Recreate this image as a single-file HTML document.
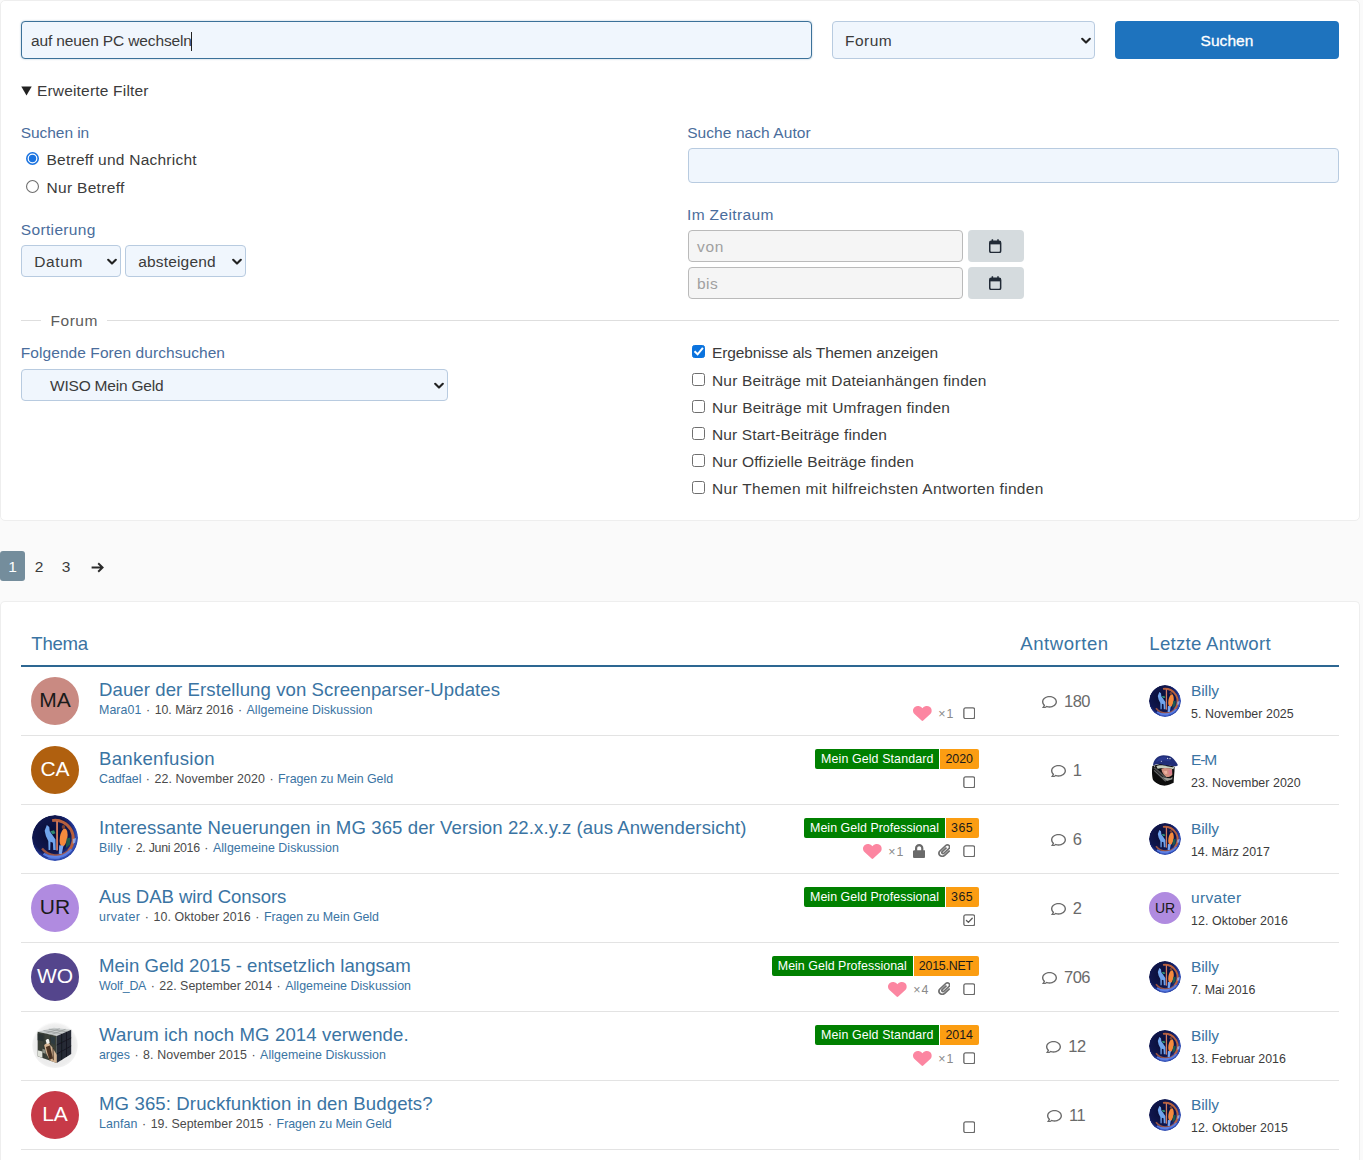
<!DOCTYPE html>
<html lang="de">
<head>
<meta charset="utf-8">
<title>Suche - Forum</title>
<style>
*{box-sizing:border-box}
html,body{margin:0;padding:0}
body{width:1363px;height:1160px;overflow:hidden;background:#fafafa;font-family:"Liberation Sans",sans-serif;font-size:15.5px;color:#3b3b3b;position:relative}
.card{position:absolute;left:0;width:1360px;background:#fff;border:1px solid #eeeeee;border-radius:5px}
#c1{top:0;height:521px}
#c2{top:601px;height:600px;border-bottom:none}
.abs{position:absolute}
.fld{position:absolute;padding-top:2px;background:#f0f6fd;border:1px solid #b8cbe0;border-radius:4px;color:#3b3b3b;font-size:15.5px;line-height:1;display:flex;align-items:center;padding-left:9px;white-space:nowrap}
.fld.focus{border-color:#3b7199;box-shadow:0 0 2px rgba(59,113,153,.45)}
.chev{position:absolute;right:3.3px;top:50%;margin-top:-3.5px;width:10px;height:8px}
.lbl{position:absolute;color:#4a6d9c;font-size:15.5px;line-height:20px;white-space:nowrap}
.txt{position:absolute;color:#3b3b3b;font-size:15.5px;line-height:20px;white-space:nowrap}
.radio{position:absolute;width:13px;height:13px;border-radius:50%;border:1px solid #767676;background:#fff}
.radio.on{border:1.7px solid #1a73e0}
.radio.on::after{content:"";position:absolute;left:1.1px;top:1.1px;width:7.4px;height:7.4px;border-radius:50%;background:#1a73e0}
.cb{position:absolute;width:13px;height:13px;border-radius:2.5px;border:1.3px solid #6f6f6f;background:#fff}
.cb.on{border:1px solid #0b73de;background:#0b73de}
.gray{position:absolute;padding-top:2px;background:#f5f5f5;border:1px solid #bababa;border-radius:4px;color:#a0a0a0;font-size:15.5px;display:flex;align-items:center;padding-left:8px}
.calbtn{position:absolute;background:#d5dbde;border-radius:4px;display:flex;align-items:center;justify-content:center}
#btn{-webkit-text-stroke:.3px #fff;padding-top:1px;position:absolute;left:1115px;top:21px;width:224px;height:38px;background:#1e73be;border-radius:4px;color:#fff;font-size:15.5px;display:flex;align-items:center;justify-content:center}
.pg{position:absolute;top:551px;height:30px;line-height:32px;font-size:15.5px;color:#3b3b3b;text-align:center}
.th{position:absolute;top:632px;font-size:18.6px;line-height:24px;color:#3a74a3;white-space:nowrap}
.row{position:absolute;left:21px;width:1318px;height:69px;border-bottom:1px solid #e3e3e3}
.av{padding-bottom:2px;position:absolute;left:10px;top:10px;width:48px;height:48px;border-radius:50%;overflow:hidden;display:flex;align-items:center;justify-content:center;font-size:21px;color:#fff}
.ti{position:absolute;left:78px;top:11px;font-size:18.6px;line-height:24px;color:#3a74a3;white-space:nowrap}
.me{position:absolute;left:78px;top:35px;font-size:12.4px;line-height:16px;color:#3a74a3;white-space:nowrap}
.me b{font-weight:400;color:#4a4a4a}
.tags{position:absolute;right:360px;top:13px;height:20px;display:flex;font-size:12.4px;line-height:20px;white-space:nowrap}
.tg{background:#008000;color:#fff;padding:0 6px;border-radius:2px 0 0 2px}
.ty{background:#fb9d12;color:#1a1a1a;padding:0 6px 0 5px;border-radius:0 2px 2px 0;border-left:1px solid #fff}
.ic{position:absolute;right:357.5px;top:37px;height:18px;display:flex;align-items:center;font-size:12.4px;color:#7a7a7a}
.rp{position:absolute;left:980px;width:130px;top:24px;height:22px;display:flex;align-items:center;justify-content:center;font-size:15px;color:#6a6a6a}
.la{position:absolute;left:1128px;top:18px;width:32px;height:32px;border-radius:50%;overflow:hidden;display:flex;align-items:center;justify-content:center;font-size:14px}
.ln{position:absolute;left:1170px;top:14px;font-size:15.5px;line-height:20px;color:#3a74a3;white-space:nowrap}
.ld{position:absolute;left:1170px;top:39px;font-size:12.4px;line-height:16px;color:#3b3b3b;white-space:nowrap}
.me i{font-style:normal;color:#4a4a4a;padding:0 4.5px}
.heart{margin-right:6.3px}
.lk{letter-spacing:1px;margin-right:2.2px;position:relative;top:.5px;color:#8a8a8a;font-size:12.4px}
.ib{width:25px;height:18px;display:flex;align-items:center;justify-content:center}
.rp svg{margin-right:7px}
.rp span{font-size:16.5px;letter-spacing:-.55px;position:relative;top:-.5px}
.caret{display:inline-block;width:1px;height:19px;background:#222;margin-left:-1px}
.me b span,.me>span{display:inline-block}
</style>
</head>
<body>
<svg width="0" height="0" style="position:absolute">
<defs>
<symbol id="i-heart" viewBox="0 30 512 452" preserveAspectRatio="none"><path d="M462.3 62.6C407.5 15.9 326 24.3 275.7 76.2L256 96.5l-19.700-20.300C186.100 24.300 104.500 15.900 49.700 62.600c-62.800 53.600-66.100 149.800-9.900 207.900l193.500 199.800c12.500 12.900 32.800 12.900 45.300 0l193.500-199.800c56.300-58.100 53-154.300-9.800-207.900z" fill="#fc86a1"/></symbol>
<symbol id="i-lock" viewBox="0 0 448 512" preserveAspectRatio="none"><path d="M400 224h-24v-72C376 68.200 307.800 0 224 0S72 68.200 72 152v72H48c-26.500 0-48 21.500-48 48v192c0 26.500 21.500 48 48 48h352c26.500 0 48-21.500 48-48V272c0-26.500-21.500-48-48-48zm-104 0H152v-72c0-39.700 32.300-72 72-72s72 32.300 72 72v72z" fill="#6a6a6a"/></symbol>
<symbol id="i-clip" viewBox="0 0 448 512" preserveAspectRatio="none"><path d="M43.246 466.142c-58.430-60.289-57.341-157.511 1.386-217.581L254.392 34c44.316-45.332 116.351-45.336 160.671 0 43.890 44.894 43.943 117.329 0 162.276L232.214 383.128c-29.855 30.537-78.633 30.111-107.982-.998-28.275-29.970-27.368-77.473 1.452-106.953l143.743-146.835c6.182-6.314 16.312-6.422 22.626-.241l22.861 22.379c6.315 6.182 6.422 16.312.241 22.626L171.427 319.927c-4.932 5.045-5.236 13.428-.648 18.292 4.372 4.634 11.245 4.711 15.688.165l182.849-186.851c19.613-20.062 19.613-52.725-.011-72.798-19.189-19.627-49.957-19.637-69.154 0L90.390 293.295c-34.763 35.560-35.299 93.120-1.191 128.313 34.010 35.093 88.985 35.137 123.058.286l172.060-175.999c6.177-6.319 16.307-6.433 22.626-.256l22.877 22.364c6.319 6.177 6.434 16.307.256 22.626l-172.060 175.998c-59.576 60.938-155.943 60.216-214.770-.485z" fill="#707070"/></symbol>
<symbol id="i-sq" viewBox="0 0 13 13"><rect x="0.9" y="0.9" width="11.2" height="11.2" rx="1.8" fill="none" stroke="#6a6a6a" stroke-width="1.4"/></symbol>
<symbol id="i-sqc" viewBox="0 0 13 13"><rect x="0.9" y="0.9" width="11.2" height="11.2" rx="1.8" fill="none" stroke="#6a6a6a" stroke-width="1.4"/><path d="M3.6 6.7 L5.6 8.7 L9.6 4.4" fill="none" stroke="#5a5a5a" stroke-width="1.4" stroke-linecap="round" stroke-linejoin="round"/></symbol>
<symbol id="i-cmt" viewBox="0 32 512 448" preserveAspectRatio="none"><path d="M256 32C114.600 32 0 125.100 0 240c0 47.600 19.900 91.200 52.900 126.300C38 405.700 7 439.100 6.500 439.500c-6.600 7-8.400 17.200-4.600 26S14.400 480 24 480c61.500 0 110-25.700 139.100-46.300C192 442.800 223.200 448 256 448c141.400 0 256-93.100 256-208S397.400 32 256 32zm0 368c-26.700 0-53.100-4.100-78.400-12.100l-22.700-7.200-19.500 13.800c-14.300 10.100-33.900 21.400-57.500 29 7.300-12.100 14.400-25.700 19.900-40.200l10.600-28.100-20.600-21.800C69.700 314.100 48 282.200 48 240c0-88.200 93.300-160 208-160s208 71.800 208 160-93.300 160-208 160z" fill="#6c6c6c"/></symbol>
<symbol id="av-billy" viewBox="0 0 48 48">
<radialGradient id="gb" cx="0.42" cy="0.42" r="0.6"><stop offset="0" stop-color="#080c34"/><stop offset="0.68" stop-color="#10174e"/><stop offset="0.8" stop-color="#1c2c80"/><stop offset="0.92" stop-color="#3352bc"/><stop offset="1" stop-color="#2b44a4"/></radialGradient>
<filter id="fb" x="-5%" y="-5%" width="110%" height="110%"><feGaussianBlur stdDeviation="0.7"/></filter>
<clipPath id="cb48"><circle cx="24" cy="24" r="24"/></clipPath>
<g clip-path="url(#cb48)">
<circle cx="24" cy="24" r="24" fill="url(#gb)"/>
<g filter="url(#fb)">
<path d="M21 5.8 A19 19 0 0 1 38 37.5" fill="none" stroke="#b8603e" stroke-width="3"/>
<path d="M10.5 35 A19 19 0 0 0 38 37.5" fill="none" stroke="#a85a40" stroke-width="2.4" opacity=".9"/>
<path d="M12 40.5 A22 22 0 0 0 41 36" fill="none" stroke="#5a80e8" stroke-width="2.6" opacity=".9"/>
<path d="M16 43 H30 M17 45 H29" stroke="#6a90f0" stroke-width="1" opacity=".8"/>
<rect x="25.2" y="6.5" width="1.9" height="30.5" fill="#d27a60"/>
<path d="M13.2 16.5 L15.5 10.5 L18 12.5 L18.5 17 L21.5 21 L24.5 25.5 L24.8 36.5 L22.2 36.5 L21.8 29 L19.3 28 L19 36.5 L17.3 36.5 L17 27 L14.5 22 Z" fill="#6fa4ec"/>
<path d="M19 17 L23 16 L24.5 19 L21.5 20 Z" fill="#2f8a70"/>
<ellipse cx="33" cy="23.5" rx="3.9" ry="9.6" transform="rotate(9 33 23.5)" fill="#f58a3c"/>
<ellipse cx="32.8" cy="12.5" rx="1.8" ry="2" fill="#7a4030"/>
<path d="M28.4 31.5 L32.8 32 L31 41 L28 40.5 Z" fill="#79a8f2"/>
<path d="M36.2 24.5 L40 23.5 L39.5 31 L35.2 34.5 Z" fill="#1d5c50"/>
<path d="M42.5 25 L46 24 L45 29 L42.5 30 Z" fill="#9ab8f0" opacity=".8"/>
</g>
</g>
</symbol>
<symbol id="av-em" viewBox="0 0 48 48">
<filter id="fe" x="-5%" y="-5%" width="110%" height="110%"><feGaussianBlur stdDeviation="0.8"/></filter>
<rect width="48" height="48" fill="#fff"/>
<g filter="url(#fe)">
<path d="M5 18 C4 26 4.5 34 6 39 C10 44 17 47.5 23 47.5 C29 46.5 34 44.5 37 43 C37 36 38.5 26 38.5 19 L20 14 Z" fill="#0e0e10"/>
<path d="M6 17.5 C6.5 8 14 2 22 2 C27 2 31 3.2 33.5 4.5 C38 8 41.5 12.5 43.5 17 L40.5 18.5 C32 17 26 17.5 21 16 C15 14.8 9.5 15.5 6 17.5 Z" fill="#222f78"/>
<path d="M10 12 C13 6 19 3.5 25 4 L34 12 C27 9 18 9 10 12 Z" fill="#2c3c94" opacity=".8"/>
<path d="M11 18.5 C15 16 22 17 27 18.5 C31 19.5 35 20 38 19.5 L36.5 23 C30 21 20 20 13 22 Z" fill="#c4ccbc"/>
<path d="M18.5 22.5 C22 20.5 29 21 34.5 22.5 L35 31 C33 34 29 35 25.5 34.5 C22 32 19.5 27.5 18.5 22.5 Z" fill="#d0907f"/>
<path d="M29 24 L34.5 24.5 L34.5 30 L30 31 Z" fill="#d87c8c"/>
<path d="M22 26 L27 25 L27.5 29.5 L24 30 Z" fill="#eab0a0"/>
<path d="M6.5 21 L9 20 L29 37 L27 39.5 Z" fill="#4a4a4a"/>
<path d="M7 25 L8.5 24 L26 40 L24.5 41.5 Z" fill="#8a8a8a" opacity=".7"/>
<path d="M18 33.5 L24 36 L33 36.5 L35 34 L35 38 L27 40.5 Z" fill="#9a9c96"/>
<circle cx="28" cy="6.5" r=".9" fill="#fff"/><circle cx="31.5" cy="7" r=".9" fill="#fff"/><circle cx="18.5" cy="11" r=".8" fill="#e8e8ff"/><circle cx="8.5" cy="18.5" r=".8" fill="#ddd"/>
</g>
</symbol>
<symbol id="av-cube" viewBox="0 0 48 48">
<radialGradient id="gc" cx="0.5" cy="0.52" r="0.5"><stop offset="0" stop-color="#eeeeee"/><stop offset="0.85" stop-color="#ececec"/><stop offset="0.96" stop-color="#f2f2f2"/><stop offset="1" stop-color="#fafafa"/></radialGradient>
<filter id="fc" x="-5%" y="-5%" width="110%" height="110%"><feGaussianBlur stdDeviation="0.7"/></filter>
<circle cx="24" cy="24" r="24" fill="url(#gc)"/>
<g filter="url(#fc)">
<path d="M5.9 10.3 L22.8 6.1 L40.9 8.2 L25.8 14.5 Z" fill="#c9cdcd"/>
<path d="M12 8.9 L31 12.3 M17.5 7.5 L36 10.2 M14 12 L29 7 M20 13.2 L35 7.6" stroke="#8c9090" stroke-width=".6" fill="none"/>
<path d="M5.9 10.3 L25.8 14.5 L25.8 42.9 L5.9 35.7 Z" fill="#3a4039"/>
<path d="M25.8 14.5 L40.9 8.2 L40.9 33.3 L25.8 42.9 Z" fill="#272a36"/>
<path d="M5.9 12 L12 13 L12 20 L5.9 19 Z" fill="#2c3230"/>
<path d="M12.5 24 L17 21 L20.5 25.5 L25.8 34 L25.8 42.9 L19 40.5 L15 33 Z" fill="#d4b494"/>
<path d="M14.5 26 L18.5 24.5 L20 30 L22 38 L18 39 L16 32 Z" fill="#4e3424"/>
<path d="M21.5 27 L22.3 27 L22.6 40 L21.8 40 Z" fill="#2a1c14"/>
<path d="M14.3 19.5 C15 17.3 17.5 17 18 19.2 L18.5 22 L15.5 23 Z" fill="#f2f2ee"/>
<path d="M5.9 29.5 L10.8 30.8 L10.8 37.4 L5.9 35.7 Z" fill="#dfe2da"/>
<path d="M11 28 L14 29 L14 33 L11 32 Z" fill="#b8bcae" opacity=".8"/>
<path d="M19 15 L24 16 L24 24 L20 22 Z" fill="#2a3a44" opacity=".8"/>
<path d="M25.8 24 L40.9 16.6 M25.8 33.4 L40.9 25 M30.9 12.4 L30.9 39.7 M36 10.3 L36 36.4" stroke="#12141c" stroke-width=".8" fill="none"/>
<path d="M12.5 11.7 L12.5 38 M19.2 13.1 L19.2 40.5" stroke="#20241f" stroke-width=".5" fill="none" opacity=".6"/>
</g>
</symbol>
</defs>
</svg>

<div class="card" id="c1"></div>
<div class="card" id="c2"></div>
<!-- search bar -->
<div class="fld focus" style="left:21px;top:21px;width:791px;height:38px"><span style="letter-spacing:-0.141px">auf neuen PC wechseln</span><span class="caret"></span></div>
<div class="fld" style="left:832px;top:21px;width:263px;height:38px;padding-left:12px"><span style="letter-spacing:0.501px">Forum</span><svg class="chev" viewBox="0 0 10 8"><path d="M1.2 1.8 L5 5.6 L8.8 1.8" fill="none" stroke="#222" stroke-width="2.1" stroke-linecap="round" stroke-linejoin="round"/></svg></div>
<div id="btn"><span style="letter-spacing:0.044px">Suchen</span></div>
<!-- filter -->
<svg class="abs" style="left:21px;top:86px" width="11" height="10" viewBox="0 0 11 10"><path d="M0.3 0.6 H10.7 L5.5 9.4 Z" fill="#222"/></svg>
<div class="txt" style="left:36.9px;top:81px"><span style="letter-spacing:0.192px">Erweiterte Filter</span></div>
<div class="lbl" style="left:20.8px;top:123px"><span style="letter-spacing:-0.069px">Suchen in</span></div>
<svg class="abs" style="left:26px;top:152px" width="13" height="13" viewBox="0 0 13 13"><circle cx="6.5" cy="6.5" r="5.7" fill="#fff" stroke="#1a73e0" stroke-width="1.6"/><circle cx="6.5" cy="6.5" r="3.7" fill="#1a73e0"/></svg>
<div class="txt" style="left:46.5px;top:150px"><span style="letter-spacing:0.239px">Betreff und Nachricht</span></div>
<svg class="abs" style="left:26px;top:180px" width="13" height="13" viewBox="0 0 13 13"><circle cx="6.5" cy="6.5" r="5.95" fill="#fff" stroke="#6e6e6e" stroke-width="1.1"/></svg>
<div class="txt" style="left:46.5px;top:178px"><span style="letter-spacing:0.313px">Nur Betreff</span></div>
<div class="lbl" style="left:20.8px;top:220px"><span style="letter-spacing:0.343px">Sortierung</span></div>
<div class="fld" style="left:21px;top:245px;width:100px;height:32px;padding-left:12.2px"><span style="letter-spacing:0.636px">Datum</span><svg class="chev" viewBox="0 0 10 8"><path d="M1.2 1.8 L5 5.6 L8.8 1.8" fill="none" stroke="#222" stroke-width="2.1" stroke-linecap="round" stroke-linejoin="round"/></svg></div>
<div class="fld" style="left:125px;top:245px;width:121px;height:32px;padding-left:12.2px"><span style="letter-spacing:0.173px">absteigend</span><svg class="chev" viewBox="0 0 10 8"><path d="M1.2 1.8 L5 5.6 L8.8 1.8" fill="none" stroke="#222" stroke-width="2.1" stroke-linecap="round" stroke-linejoin="round"/></svg></div>
<div class="lbl" style="left:687.2px;top:123px"><span style="letter-spacing:0.075px">Suche nach Autor</span></div>
<div class="fld" style="left:688px;top:148px;width:651px;height:35px"></div>
<div class="lbl" style="left:687px;top:205px"><span style="letter-spacing:0.361px">Im Zeitraum</span></div>
<div class="gray" style="left:688px;top:230px;width:275px;height:32px"><span style="letter-spacing:0.7px">von</span></div>
<div class="calbtn" style="left:968px;top:230px;width:56px;height:32px"><svg width="12.4" height="14.3" viewBox="0 0 12.4 13.6" preserveAspectRatio="none" style="position:relative;left:-.6px;top:0"><path d="M3.4 0.3v2.2M9 0.3v2.2" stroke="#212a36" stroke-width="1.5"/><rect x="0.75" y="2.2" width="10.9" height="10.6" rx="1.5" fill="none" stroke="#212a36" stroke-width="1.5"/><rect x="0.75" y="2.2" width="10.9" height="2.9" fill="#212a36"/></svg></div>
<div class="gray" style="left:688px;top:267px;width:275px;height:32px"><span style="letter-spacing:0.486px">bis</span></div>
<div class="calbtn" style="left:968px;top:267px;width:56px;height:32px"><svg width="12.4" height="14.3" viewBox="0 0 12.4 13.6" preserveAspectRatio="none" style="position:relative;left:-.6px;top:0"><path d="M3.4 0.3v2.2M9 0.3v2.2" stroke="#212a36" stroke-width="1.5"/><rect x="0.75" y="2.2" width="10.9" height="10.6" rx="1.5" fill="none" stroke="#212a36" stroke-width="1.5"/><rect x="0.75" y="2.2" width="10.9" height="2.9" fill="#212a36"/></svg></div>
<!-- fieldset -->
<div class="abs" style="left:21px;top:320px;width:20px;height:1px;background:#dedede"></div>
<div class="abs" style="left:107px;top:320px;width:1232px;height:1px;background:#dedede"></div>
<div class="txt" style="left:50.5px;top:311px;color:#5c5c5c"><span style="letter-spacing:0.526px">Forum</span></div>
<div class="lbl" style="left:20.8px;top:343px"><span style="letter-spacing:0.068px">Folgende Foren durchsuchen</span></div>
<div class="fld" style="left:21px;top:369px;width:427px;height:32px;padding-left:28px"><span style="letter-spacing:-0.206px">WISO Mein Geld</span><svg class="chev" viewBox="0 0 10 8"><path d="M1.2 1.8 L5 5.6 L8.8 1.8" fill="none" stroke="#222" stroke-width="2.1" stroke-linecap="round" stroke-linejoin="round"/></svg></div>
<div class="cb on" style="left:692px;top:345px"><svg width="11" height="11" viewBox="0 0 11 11" style="position:absolute;left:0;top:0"><path d="M1.5 5.3 L4.6 8.3 L9.9 1.9" fill="none" stroke="#fff" stroke-width="2"/></svg></div>
<div class="txt" style="left:712px;top:343px"><span style="letter-spacing:-0.123px">Ergebnisse als Themen anzeigen</span></div>
<div class="cb" style="left:692px;top:373px"></div>
<div class="txt" style="left:712px;top:371px"><span style="letter-spacing:0.178px">Nur Beiträge mit Dateianhängen finden</span></div>
<div class="cb" style="left:692px;top:400px"></div>
<div class="txt" style="left:712px;top:398px"><span style="letter-spacing:0.226px">Nur Beiträge mit Umfragen finden</span></div>
<div class="cb" style="left:692px;top:427px"></div>
<div class="txt" style="left:712px;top:425px"><span style="letter-spacing:0.144px">Nur Start-Beiträge finden</span></div>
<div class="cb" style="left:692px;top:454px"></div>
<div class="txt" style="left:712px;top:452px"><span style="letter-spacing:0.168px">Nur Offizielle Beiträge finden</span></div>
<div class="cb" style="left:692px;top:481px"></div>
<div class="txt" style="left:712px;top:479px"><span style="letter-spacing:0.311px">Nur Themen mit hilfreichsten Antworten finden</span></div>
<!-- pagination -->
<div class="pg" style="left:0;width:25px;background:#748d9c;color:#fff;border-radius:3px">1</div>
<div class="pg" style="left:27px;width:24px">2</div>
<div class="pg" style="left:54px;width:24px">3</div>
<svg class="abs" style="left:91.3px;top:561.5px" width="13" height="11" viewBox="0 0 13 11"><path d="M0.6 5.5 H11.4 M7.2 1.2 L11.6 5.5 L7.2 9.8" fill="none" stroke="#2a2a2a" stroke-width="1.9" stroke-linecap="butt" stroke-linejoin="miter"/></svg>
<!-- table header -->
<div class="th" style="left:31.3px"><span style="letter-spacing:-0.269px">Thema</span></div>
<div class="th" style="left:1020.3px"><span style="letter-spacing:0.523px">Antworten</span></div>
<div class="th" style="left:1149.3px"><span style="letter-spacing:0.267px">Letzte Antwort</span></div>
<div class="abs" style="left:21px;top:665px;width:1318px;height:2px;background:#2d6792"></div>
<!-- rows -->
<div class="row" style="top:667px">
<div class="av" style="background:#c98a82;color:#1a1a1a">MA</div>
<div class="ti"><span style="letter-spacing:0.07px">Dauer der Erstellung von Screenparser-Updates</span></div>
<div class="me"><span style="letter-spacing:0.077px">Mara01</span><i>·</i><b><span style="letter-spacing:-0.035px">10. März 2016</span></b><i>·</i><span style="letter-spacing:0.057px">Allgemeine Diskussion</span></div>
<div class="ic"><svg class="heart" width="18.8" height="15"><use href="#i-heart"/></svg><span class="lk">×1</span><span class="ib"><svg width="12.5" height="12.5" viewBox="0 0 13 13" style="position:relative;top:0;left:-.2px"><use href="#i-sq"/></svg></span></div>
<div class="rp"><svg width="15" height="12.6"><use href="#i-cmt"/></svg><span>180</span></div>
<div class="la"><svg width="100%" height="100%" viewBox="0 0 48 48"><use href="#av-billy"/></svg></div>
<div class="ln"><span style="letter-spacing:-0.08px">Billy</span></div>
<div class="ld"><span style="letter-spacing:0.05px">5. November 2025</span></div>
</div>
<div class="row" style="top:736px">
<div class="av" style="background:#b0600f;color:#fff">CA</div>
<div class="ti"><span style="letter-spacing:0.265px">Bankenfusion</span></div>
<div class="me"><span style="letter-spacing:-0.053px">Cadfael</span><i>·</i><b><span style="letter-spacing:0.091px">22. November 2020</span></b><i>·</i><span style="letter-spacing:-0.039px">Fragen zu Mein Geld</span></div>
<div class="tags"><span class="tg"><span style="letter-spacing:0.117px">Mein Geld Standard</span></span><span class="ty"><span style="letter-spacing:0.007px">2020</span></span></div>
<div class="ic"><span class="ib"><svg width="12.5" height="12.5" viewBox="0 0 13 13" style="position:relative;top:0;left:-.2px"><use href="#i-sq"/></svg></span></div>
<div class="rp"><svg width="15" height="12.6"><use href="#i-cmt"/></svg><span>1</span></div>
<div class="la"><svg width="100%" height="100%" viewBox="0 0 48 48"><use href="#av-em"/></svg></div>
<div class="ln"><span style="letter-spacing:-1.161px">E-M</span></div>
<div class="ld"><span style="letter-spacing:0.054px">23. November 2020</span></div>
</div>
<div class="row" style="top:805px">
<div class="av"><svg width="100%" height="100%" viewBox="0 0 48 48"><use href="#av-billy"/></svg></div>
<div class="ti"><span style="letter-spacing:0.082px">Interessante Neuerungen in MG 365 der Version 22.x.y.z (aus Anwendersicht)</span></div>
<div class="me"><span style="letter-spacing:0.17px">Billy</span><i>·</i><b><span style="letter-spacing:-0.283px">2. Juni 2016</span></b><i>·</i><span style="letter-spacing:0.057px">Allgemeine Diskussion</span></div>
<div class="tags"><span class="tg"><span style="letter-spacing:0.042px">Mein Geld Professional</span></span><span class="ty"><span style="letter-spacing:0.406px">365</span></span></div>
<div class="ic"><svg class="heart" width="18.8" height="15"><use href="#i-heart"/></svg><span class="lk">×1</span><span class="ib"><svg width="12.4" height="14" viewBox="0 0 448 512" preserveAspectRatio="none" style="position:relative;top:-.4px"><use href="#i-lock"/></svg></span><span class="ib"><svg width="12.6" height="13.2" viewBox="0 0 448 512" preserveAspectRatio="none" style="position:relative;top:-.6px"><use href="#i-clip"/></svg></span><span class="ib"><svg width="12.5" height="12.5" viewBox="0 0 13 13" style="position:relative;top:0;left:-.2px"><use href="#i-sq"/></svg></span></div>
<div class="rp"><svg width="15" height="12.6"><use href="#i-cmt"/></svg><span>6</span></div>
<div class="la"><svg width="100%" height="100%" viewBox="0 0 48 48"><use href="#av-billy"/></svg></div>
<div class="ln"><span style="letter-spacing:-0.08px">Billy</span></div>
<div class="ld"><span style="letter-spacing:-0.035px">14. März 2017</span></div>
</div>
<div class="row" style="top:874px">
<div class="av" style="background:#b08be0;color:#1a1a1a">UR</div>
<div class="ti"><span style="letter-spacing:-0.09px">Aus DAB wird Consors</span></div>
<div class="me"><span style="letter-spacing:0.387px">urvater</span><i>·</i><b><span style="letter-spacing:0.103px">10. Oktober 2016</span></b><i>·</i><span style="letter-spacing:-0.039px">Fragen zu Mein Geld</span></div>
<div class="tags"><span class="tg"><span style="letter-spacing:0.042px">Mein Geld Professional</span></span><span class="ty"><span style="letter-spacing:0.406px">365</span></span></div>
<div class="ic"><span class="ib"><svg width="12.5" height="12.5" viewBox="0 0 13 13" style="position:relative;top:0;left:-.2px"><use href="#i-sqc"/></svg></span></div>
<div class="rp"><svg width="15" height="12.6"><use href="#i-cmt"/></svg><span>2</span></div>
<div class="la" style="background:#b08be0;color:#1a1a1a">UR</div>
<div class="ln"><span style="letter-spacing:0.308px">urvater</span></div>
<div class="ld"><span style="letter-spacing:0.07px">12. Oktober 2016</span></div>
</div>
<div class="row" style="top:943px">
<div class="av" style="background:#54458c;color:#fff">WO</div>
<div class="ti"><span style="letter-spacing:0.017px">Mein Geld 2015 - entsetzlich langsam</span></div>
<div class="me"><span style="letter-spacing:-0.212px">Wolf_DA</span><i>·</i><b><span style="letter-spacing:0.024px">22. September 2014</span></b><i>·</i><span style="letter-spacing:0.057px">Allgemeine Diskussion</span></div>
<div class="tags"><span class="tg"><span style="letter-spacing:0.042px">Mein Geld Professional</span></span><span class="ty"><span style="letter-spacing:-0.2px">2015.NET</span></span></div>
<div class="ic"><svg class="heart" width="18.8" height="15"><use href="#i-heart"/></svg><span class="lk">×4</span><span class="ib"><svg width="12.6" height="13.2" viewBox="0 0 448 512" preserveAspectRatio="none" style="position:relative;top:-.6px"><use href="#i-clip"/></svg></span><span class="ib"><svg width="12.5" height="12.5" viewBox="0 0 13 13" style="position:relative;top:0;left:-.2px"><use href="#i-sq"/></svg></span></div>
<div class="rp"><svg width="15" height="12.6"><use href="#i-cmt"/></svg><span>706</span></div>
<div class="la"><svg width="100%" height="100%" viewBox="0 0 48 48"><use href="#av-billy"/></svg></div>
<div class="ln"><span style="letter-spacing:-0.08px">Billy</span></div>
<div class="ld"><span style="letter-spacing:-0.045px">7. Mai 2016</span></div>
</div>
<div class="row" style="top:1012px">
<div class="av"><svg width="100%" height="100%" viewBox="0 0 48 48"><use href="#av-cube"/></svg></div>
<div class="ti"><span style="letter-spacing:0.111px">Warum ich noch MG 2014 verwende.</span></div>
<div class="me"><span style="letter-spacing:-0.025px">arges</span><i>·</i><b><span style="letter-spacing:0.123px">8. November 2015</span></b><i>·</i><span style="letter-spacing:0.057px">Allgemeine Diskussion</span></div>
<div class="tags"><span class="tg"><span style="letter-spacing:0.117px">Mein Geld Standard</span></span><span class="ty"><span style="letter-spacing:0.007px">2014</span></span></div>
<div class="ic"><svg class="heart" width="18.8" height="15"><use href="#i-heart"/></svg><span class="lk">×1</span><span class="ib"><svg width="12.5" height="12.5" viewBox="0 0 13 13" style="position:relative;top:0;left:-.2px"><use href="#i-sq"/></svg></span></div>
<div class="rp"><svg width="15" height="12.6"><use href="#i-cmt"/></svg><span>12</span></div>
<div class="la"><svg width="100%" height="100%" viewBox="0 0 48 48"><use href="#av-billy"/></svg></div>
<div class="ln"><span style="letter-spacing:-0.08px">Billy</span></div>
<div class="ld"><span style="letter-spacing:-0.018px">13. Februar 2016</span></div>
</div>
<div class="row" style="top:1081px">
<div class="av" style="background:#c73a48;color:#fff">LA</div>
<div class="ti"><span style="letter-spacing:0.108px">MG 365: Druckfunktion in den Budgets?</span></div>
<div class="me"><span style="letter-spacing:0.099px">Lanfan</span><i>·</i><b><span style="letter-spacing:0.03px">19. September 2015</span></b><i>·</i><span style="letter-spacing:-0.039px">Fragen zu Mein Geld</span></div>
<div class="ic"><span class="ib"><svg width="12.5" height="12.5" viewBox="0 0 13 13" style="position:relative;top:0;left:-.2px"><use href="#i-sq"/></svg></span></div>
<div class="rp"><svg width="15" height="12.6"><use href="#i-cmt"/></svg><span>11</span></div>
<div class="la"><svg width="100%" height="100%" viewBox="0 0 48 48"><use href="#av-billy"/></svg></div>
<div class="ln"><span style="letter-spacing:-0.08px">Billy</span></div>
<div class="ld"><span style="letter-spacing:0.07px">12. Oktober 2015</span></div>
</div>
</body>
</html>
